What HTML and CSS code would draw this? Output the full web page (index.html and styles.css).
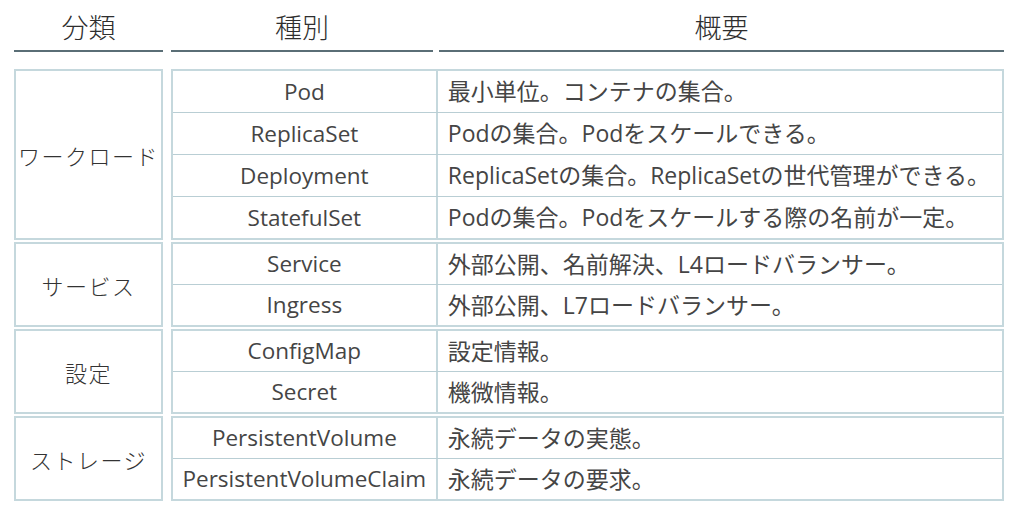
FILE: index.html
```html
<!DOCTYPE html>
<html lang="ja">
<head>
<meta charset="utf-8">
<link rel="stylesheet" href="styles.css">
</head>
<body>
<div class="table">
  <div class="head">
    <div class="h c1">分類</div>
    <div class="h c2">種別</div>
    <div class="h c3">概要</div>
  </div>
  <div class="group big">
    <div class="cat">ワークロード</div>
    <div class="rows">
      <div class="row"><div class="kind">Pod</div><div class="desc">最小単位。コンテナの集合。</div></div>
      <div class="row"><div class="kind">ReplicaSet</div><div class="desc">Podの集合。Podをスケールできる。</div></div>
      <div class="row"><div class="kind">Deployment</div><div class="desc">ReplicaSetの集合。ReplicaSetの世代管理ができる。</div></div>
      <div class="row"><div class="kind">StatefulSet</div><div class="desc">Podの集合。Podをスケールする際の名前が一定。</div></div>
    </div>
  </div>
  <div class="group">
    <div class="cat">サービス</div>
    <div class="rows">
      <div class="row"><div class="kind">Service</div><div class="desc">外部公開、名前解決、L4ロードバランサー。</div></div>
      <div class="row"><div class="kind">Ingress</div><div class="desc">外部公開、L7ロードバランサー。</div></div>
    </div>
  </div>
  <div class="group">
    <div class="cat">設定</div>
    <div class="rows">
      <div class="row"><div class="kind">ConfigMap</div><div class="desc">設定情報。</div></div>
      <div class="row"><div class="kind">Secret</div><div class="desc">機微情報。</div></div>
    </div>
  </div>
  <div class="group">
    <div class="cat">ストレージ</div>
    <div class="rows">
      <div class="row"><div class="kind">PersistentVolume</div><div class="desc">永続データの実態。</div></div>
      <div class="row"><div class="kind">PersistentVolumeClaim</div><div class="desc">永続データの要求。</div></div>
    </div>
  </div>
</div>
</body>
</html>
```
FILE: styles.css
```css
html, body {
  margin: 0;
  padding: 0;
  background: #ffffff;
}
body {
  font-family: "Open Sans", "Noto Sans CJK JP", sans-serif;
  color: #454545;
}
.table {
  width: 990px;
  padding: 0 0 0 14px;
}
.head {
  display: flex;
  height: 52px;
  margin-bottom: 17px;
}
.h {
  font-family: "Noto Sans CJK JP", sans-serif;
  font-weight: 300;
  font-size: 27px;
  color: #2e2e2e;
  text-align: center;
  line-height: 54px;
  height: 50px;
  border-bottom: 2px solid #5a6e76;
}
.c1 { width: 149px; margin-right: 8px; }
.c2 { width: 262px; margin-right: 6px; }
.c3 { width: 565px; }
.group {
  display: flex;
  margin-bottom: 2px;
}
.cat {
  width: 145px;
  margin-right: 8px;
  border: 2px solid #c5d8dd;
  display: flex;
  align-items: center;
  justify-content: center;
  font-family: "Noto Sans CJK JP", sans-serif;
  font-weight: 300;
  font-size: 22px;
  letter-spacing: 1.5px;
  color: #333;
}
.rows {
  width: 830px;
  border: 2px solid #c5d8dd;
}
.row {
  display: grid;
  grid-template-columns: 265px 1fr;
  height: 40px;
  border-top: 1px solid #b9ced4;
}
.big .row { height: 41px; }
.row:first-child { border-top: none; }
.kind {
  border-right: 2px solid #c5d8dd;
  text-align: center;
  font-size: 22.5px;
  line-height: 40px;
}
.big .kind, .big .desc { line-height: 41px; }
.desc {
  padding-left: 10px;
  font-size: 23px;
  line-height: 40px;
  white-space: nowrap;
}
```
